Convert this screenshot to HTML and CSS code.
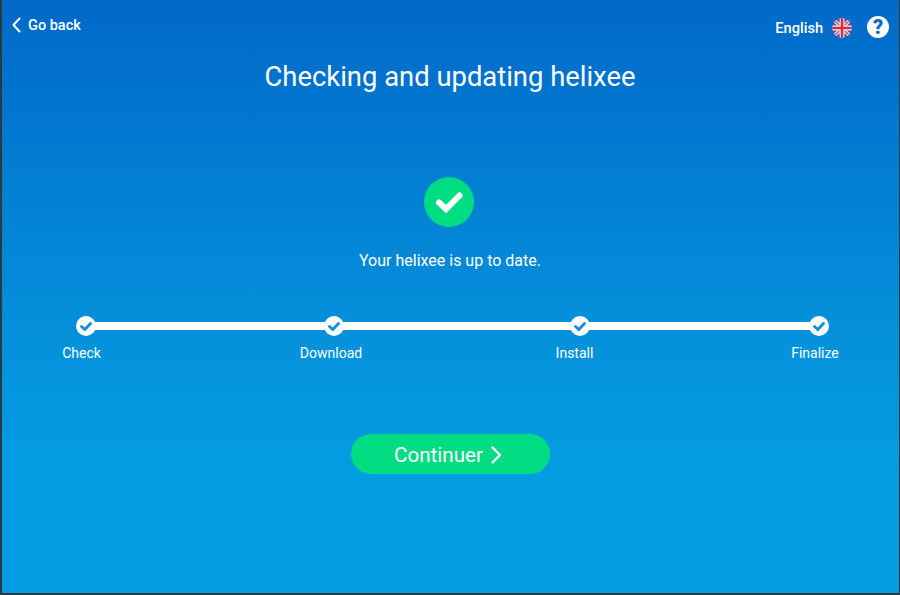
FILE: index.html
```html
<!DOCTYPE html>
<html lang="en">
<head>
  <meta charset="UTF-8" />
  <title>Checking and updating helixee</title>
  <link rel="stylesheet" href="styles.css">
</head>
<body>
  <div class="screen">
    <div class="topbar">
      <a class="back">
        <svg class="chevron-small" viewBox="0 0 9 16"><path d="M7.5 1.5 1.5 8l6 6.5" /></svg>
        Go back
      </a>
      <div class="top-right">
        <span class="lang">English</span>
        <svg class="flag" viewBox="0 0 20 20">
          <defs><clipPath id="flag-clip"><circle cx="10" cy="10" r="10" /></clipPath></defs>
          <g clip-path="url(#flag-clip)">
            <rect width="20" height="20" fill="#2f5fb3" />
            <path d="M0 0 20 20M20 0 0 20" stroke="#f4f6fa" stroke-width="3.400" />
            <path d="M0 0 20 20M20 0 0 20" stroke="#e8405c" stroke-width="1.500" />
            <path d="M7.600 0h4.800v20H7.600zM0 7.600h20v4.800H0z" fill="#f4f6fa" />
            <path d="M8.700 0h2.600v20H8.700zM0 8.700h20v2.600H0z" fill="#e0283f" />
          </g>
        </svg>
        <span class="help">?</span>
      </div>
    </div>

    <h1 class="title">Checking and updating helixee</h1>

    <div class="status-icon">
      <svg viewBox="0 0 50 50"><path d="M15 25.500 22 32 35.500 18.500" /></svg>
    </div>
    <p class="status-text">Your helixee is up to date.</p>

    <div class="steps">
      <div class="line"></div>
      <div class="step step-check">
        <span class="dot"><svg viewBox="0 0 20 20"><path d="M5.500 10.500 8.800 13.500 14.500 7.500" /></svg></span>
        <span class="label">Check</span>
      </div>
      <div class="step step-download">
        <span class="dot"><svg viewBox="0 0 20 20"><path d="M5.500 10.500 8.800 13.500 14.500 7.500" /></svg></span>
        <span class="label">Download</span>
      </div>
      <div class="step step-install">
        <span class="dot"><svg viewBox="0 0 20 20"><path d="M5.500 10.500 8.800 13.500 14.500 7.500" /></svg></span>
        <span class="label">Install</span>
      </div>
      <div class="step step-finalize">
        <span class="dot"><svg viewBox="0 0 20 20"><path d="M5.500 10.500 8.800 13.500 14.500 7.500" /></svg></span>
        <span class="label">Finalize</span>
      </div>
    </div>

    <button class="continue">
      Continuer
      <svg class="chevron-big" viewBox="0 0 11 18"><path d="M1.500 1.500 9 9l-7.500 7.500" /></svg>
    </button>
  </div>
</body>
</html>
```

FILE: styles.css
```css
:root {
  --green: #00dc82;
  --blue-top: #0069c9;
  --blue-bottom: #049de1;
}

html, body {
  margin: 0;
  height: 100%;
  overflow: hidden;
}

body {
  font-family: Roboto, 'Noto Sans', sans-serif;
  color: #fff;
}

.screen {
  box-sizing: border-box;
  width: 900px;
  height: 595px;
  padding-top: 13px;
  padding-right: 1px;
  display: flex;
  flex-direction: column;
  align-items: center;
  background: linear-gradient(to bottom, var(--blue-top), #0490da 55%, var(--blue-bottom) 80%);
  border-left: 2px solid #2a3a44;
  border-right: 1px solid #2a3a44;
  border-bottom: 2px solid #2a3a44;
}

.topbar {
  align-self: stretch;
  display: flex;
  justify-content: space-between;
  align-items: flex-start;
  padding: 0 9px 0 10px;
  height: 30px;
}

.back {
  display: flex;
  align-items: center;
  gap: 7px;
  margin-top: 1px;
  font-size: 14.500px;
  font-weight: 500;
  line-height: 23px;
}

.chevron-small {
  width: 9px;
  height: 16px;
  margin-top: -2px;
}

.chevron-small path, .chevron-big path {
  fill: none;
  stroke: #fff;
  stroke-width: 2;
  stroke-linecap: round;
  stroke-linejoin: round;
}

.top-right {
  display: flex;
  align-items: center;
  margin-top: 3px;
}

.lang {
  font-size: 14.600px;
  font-weight: 500;
  line-height: 24px;
}

.flag {
  width: 20px;
  height: 20px;
  margin-left: 9px;
}

.help {
  width: 22px;
  height: 22px;
  margin-left: 15px;
  margin-top: -2px;
  border-radius: 50%;
  background: #fff;
  color: var(--blue-top);
  font-size: 20px;
  font-weight: 900;
  line-height: 22px;
  text-align: center;
}

.title {
  margin: 16px 0 0;
  font-size: 27.400px;
  font-weight: 400;
  line-height: 36px;
}

.status-icon {
  width: 50px;
  height: 50px;
  margin-top: 82px;
  margin-left: -3px;
  border-radius: 50%;
  background: var(--green);
}

.status-icon svg {
  display: block;
  width: 50px;
  height: 50px;
}

.status-icon path {
  fill: none;
  stroke: #fff;
  stroke-width: 6;
  stroke-linecap: round;
}

.status-text {
  margin: 23px 0 0;
  font-size: 16px;
  font-weight: 400;
  line-height: 22px;
}

.steps {
  position: relative;
  width: 897px;
  height: 55px;
  margin-top: 44px;
}

.line {
  position: absolute;
  left: 84px;
  right: 77px;
  top: 6px;
  height: 8px;
  background: #fff;
}

.step {
  position: absolute;
  top: 0;
  width: 0;
  display: flex;
  flex-direction: column;
  align-items: center;
}

.step-check { left: 80px; }
.step-download { left: 329.500px; }
.step-install { left: 573px; }
.step-finalize { left: 813.500px; }

.dot {
  flex: none;
  width: 20px;
  height: 20px;
  border-radius: 50%;
  background: #fff;
}

.step-check .dot { margin-left: 8px; }
.step-download .dot { margin-left: 5px; }
.step-install .dot { margin-left: 10px; }
.step-finalize .dot { margin-left: 7px; }

.dot svg {
  display: block;
  width: 20px;
  height: 20px;
}

.dot path {
  fill: none;
  stroke: #0a8fe0;
  stroke-width: 2.800;
  stroke-linecap: round;
}

.label {
  margin-top: 8px;
  font-size: 14px;
  line-height: 18px;
  white-space: nowrap;
}

.continue {
  display: flex;
  align-items: center;
  justify-content: center;
  gap: 8px;
  width: 199px;
  height: 40px;
  margin-top: 63px;
  padding: 2px 4px 0 0;
  border: none;
  border-radius: 20px;
  background: var(--green);
  color: #fff;
  font-family: inherit;
  font-size: 20.600px;
}

.chevron-big {
  width: 11px;
  height: 18px;
}

.chevron-big path {
  stroke-width: 2.400;
}
```
